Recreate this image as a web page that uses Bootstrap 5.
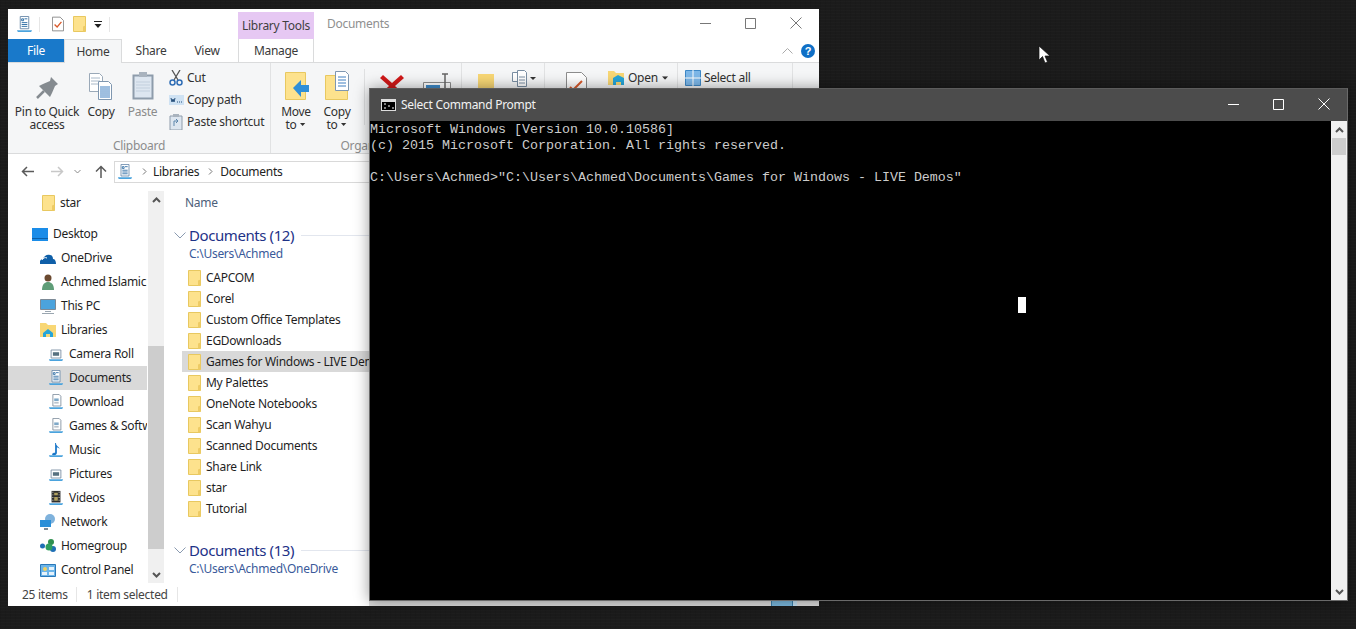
<!DOCTYPE html>
<html lang="en">
<head>
<meta charset="utf-8">
<title>Select Command Prompt</title>
<link rel="stylesheet" href="https://cdn.jsdelivr.net/npm/bootstrap@5.3.0/dist/css/bootstrap.min.css">
<style>
html,body{margin:0;height:629px;overflow:hidden;background:#1b1b1b}
.desk{position:relative;width:1356px;height:629px;overflow:hidden;background-color:#1b1b1b;background-image:repeating-linear-gradient(0deg,rgba(255,255,255,.012) 0 1px,transparent 1px 3px),repeating-linear-gradient(90deg,rgba(0,0,0,.06) 0 1px,transparent 1px 5px);font-family:"Noto Sans",sans-serif;letter-spacing:-.28px}
.xwin{position:absolute;left:8px;top:9px;width:811px;height:597px;background:#fff;color:#1c1c1c;font-size:12px;line-height:16px;overflow:hidden}
.cwin{position:absolute;left:369px;top:88px;width:979px;height:513px;background:#000;border:1px solid #6a6a6a;border-top-color:#5c5c5c;box-shadow:0 0 14px rgba(0,0,0,.4)}
.titlerow{height:30px}
.libtools{align-self:flex-end;width:76px;height:27px;margin-left:128px;background:#e6c8f3;color:#3f3f3f;line-height:28px;text-align:center}
.wintitle{margin-left:13px;color:#8f8f8f;margin-top:-1px}
.capbtn{width:45px;height:28px;margin-bottom:2px}
.tabrow{height:24px;border-bottom:1px solid #dadbdc}
.tabx{height:24px;text-align:center;line-height:24px;color:#3a3a3a}
.tabfile{width:56px;background:#1979ca;color:#fff;height:23px;line-height:23px}
.tabhome{width:58px;background:#f5f6f7;border:1px solid #dadbdc;border-bottom:0;line-height:23px}
.tabshare{width:58px}.tabview{width:54px}
.tabman{width:76px;margin-left:4px;border:solid #dadbdc;border-width:0 1px}
.ribbon{height:91px;background:#f5f6f7;border-bottom:1px solid #dadbdc}
.rgroup{position:relative;height:90px;border-right:1px solid #e1e2e3;flex:none}
.rglabel{position:absolute;left:0;right:0;bottom:-2px;height:18px;line-height:18px;text-align:center;color:#8c8c8c}
.bigb{flex:none;text-align:center;padding-top:8px;line-height:13px;color:#303030}
.bigb svg{display:block;margin:0 auto 1px}
.bigb svg.carety{display:inline-block;margin:0 0 2px 1px}
.off{color:#8b8b8b}
.smallb{height:22px;line-height:22px;color:#303030;white-space:nowrap}
.ricon{width:16px;margin-right:3px;flex:none}
.addrrow{height:37px;padding-bottom:2px}
.addrbox{width:400px;height:22px;border:1px solid #d9d9d9;color:#222}
.navpane{width:139px;flex:none;overflow:hidden;white-space:nowrap;color:#1f1f1f}
.navi{height:24px;flex:none;gap:5px}
.navi svg{flex:none}
.lv0{padding-left:24px}.lv1{padding-left:32px}.lv2{padding-left:40px}.lv1s{padding-left:34px;gap:5px}
.picked{background:#d9d9d9}
.vscroll{width:16px;flex:none;margin-left:1px;background:#f0f0f0}
.vthumb{position:absolute;left:0;right:0;background:#cdcdcd}
.filepane{flex:1;padding-left:10px;min-width:0;white-space:nowrap}
.namehead{height:22px;line-height:24px;padding-left:11px;color:#4c607a}
.grphead{height:21px;font-size:15px;line-height:21px;color:#1e3287;letter-spacing:-.42px}
.grphead svg{margin-right:3px}
.grpline{flex:1;height:1px;background:#e2e6ee;margin-left:7px}
.grppath{height:16px;margin:0 0 0 15px;color:#3a5a9a}
.frow{height:21px;margin-left:8px;padding-left:6px;color:#1f1f1f;gap:5px}
.frow svg{flex:none}
.statbar{height:23px;color:#444;padding-left:14px;position:relative}
.statsep{width:1px;height:15px;background:#e6e6e6}
.viewbar{position:absolute;left:361px;right:0;bottom:0;height:5px;background:#dcdcdc}
.viewon{position:absolute;left:402px;width:22px;top:0;bottom:0;background:#7ab8de;border:solid #3b80ad;border-width:0 1px;box-shadow:4px 0 0 #c4e2f5}
.ctitle{height:32px;background:#4c4c4c;color:#f2f2f2;font-size:12px}
.ccap{width:45px;height:30px;margin-bottom:2px}
.cbody{height:479px}
.cscreen{flex:1;color:#ccc;font:13.33px/16px "Liberation Mono",monospace;letter-spacing:0;white-space:pre;position:relative;padding:1px 0 0}
.cscroll{width:16px;flex:none;background:#f0f0f0;position:relative}
.selcell{position:absolute;left:648px;top:176px;width:8px;height:16px;background:#fff}
.mouse{position:absolute;left:1038px;top:45px}
</style>
</head>
<body>
<svg width="0" height="0" class="d-block position-absolute">
<defs>
<symbol id="fld" viewBox="0 0 13 16"><path d="M.5.5h12v15H.5z" fill="#fde28d" stroke="#e8c860"/><path d="M10 15.500v-5l2.500-1v6z" fill="#eecb65"/></symbol>
<symbol id="libdoc" viewBox="0 0 18 18"><path d="M4.500.5h9v13h-9z" fill="#fff" stroke="#6d8cab"/><path d="M6 3h2v2H6zM9 3h3M6 7h6M6 9h6M6 11h6" stroke="#2f6ea5" fill="none"/><path d="M1 15h16l-1 2H2z" fill="#4ba3dd"/></symbol>
<symbol id="camdoc" viewBox="0 0 18 18"><path d="M3.500 4.500h11v9h-11z" fill="#fff" stroke="#7a8ea3"/><path d="M5.500 7h7v4h-7z" fill="#56707f"/><path d="M1 15h16l-1 2H2z" fill="#4ba3dd"/></symbol>
<symbol id="dldoc" viewBox="0 0 18 18"><path d="M5.500.5h7l2 2v11h-9z" fill="#fff" stroke="#8391a0"/><path d="M7 5h5v3H7z" fill="#7ea8c8"/><path d="M7 10h5" stroke="#8391a0"/><path d="M1 15h16l-1 2H2z" fill="#4ba3dd"/></symbol>
<symbol id="music" viewBox="0 0 18 18"><path d="M9 1c0 4 4 4 4 7-1-1-2-2-3-2v6c0 2-2 3-4 3-1 0-2-1-1-2s2-1 3-1V1z" fill="#1976c8"/><path d="M1 15h16l-1 2H2z" fill="#4ba3dd"/></symbol>
<symbol id="video" viewBox="0 0 18 18"><path d="M4 1h10v13H4z" fill="#2e2e2e"/><path d="M7 3h4v3H7zM7 8h4v4H7z" fill="#b0a060"/><path d="M5 2h1v1H5zM5 5h1v1H5zM5 8h1v1H5zM5 11h1v1H5zM12 2h1v1h-1zM12 5h1v1h-1zM12 8h1v1h-1zM12 11h1v1h-1z" fill="#ddd"/><path d="M1 15h16l-1 2H2z" fill="#4ba3dd"/></symbol>
<symbol id="lcaret" viewBox="0 0 8 4"><path d="M0 0h7L3.500 4z" fill="#333"/></symbol>
</defs>
</svg>
<div class="desk">

<div class="xwin d-flex flex-column">
  <div class="titlerow d-flex align-items-center flex-none">
    <svg style="margin-left:8px" width="17" height="17" viewBox="0 0 18 18"><use href="#libdoc"/></svg>
    <span class="statsep" style="margin-left:6px"></span>
    <svg style="margin-left:12px" width="12" height="16" viewBox="0 0 14 17"><path d="M.5.500h9l4 4v12H.5z" fill="#fff" stroke="#7f7f7f"/><path d="M3 9l3 3 5-6" stroke="#d95a2b" stroke-width="1.500" fill="none"/></svg>
    <svg style="margin-left:9px" width="13" height="16"><use href="#fld"/></svg>
    <svg style="margin-left:8px" width="8" height="7" viewBox="0 0 8 7"><path d="M0 0h8v1H0zM.5 3h7L4 7z" fill="#222"/></svg>
    <span class="statsep" style="margin-left:7px"></span>
    <div class="libtools">Library Tools</div>
    <div class="wintitle">Documents</div>
    <div class="ms-auto d-flex" style="margin-right:1px">
      <div class="capbtn d-flex align-items-center justify-content-center"><svg width="11" height="11"><path d="M0 5.500h11" stroke="#777"/></svg></div>
      <div class="capbtn d-flex align-items-center justify-content-center"><svg width="11" height="11"><path d="M.5.500h10v10H.5z" fill="none" stroke="#777"/></svg></div>
      <div class="capbtn d-flex align-items-center justify-content-center"><svg width="12" height="12"><path d="M.5.500l11 11M11.500.500l-11 11" stroke="#777"/></svg></div>
    </div>
  </div>
  <div class="tabrow d-flex flex-none">
    <div class="tabx tabfile">File</div>
    <div class="tabx tabhome">Home</div>
    <div class="tabx tabshare">Share</div>
    <div class="tabx tabview">View</div>
    <div class="tabx tabman">Manage</div>
    <div class="ms-auto d-flex align-items-center">
      <svg class="me-2" width="11" height="6"><path d="M.5 5.500l5-5 5 5" fill="none" stroke="#aaa"/></svg>
      <svg class="me-1" width="14" height="14"><circle cx="7" cy="7" r="7" fill="#0f6fc6"/><text x="7" y="11" text-anchor="middle" font-size="11" font-weight="700" fill="#fff" font-family="Liberation Sans">?</text></svg>
    </div>
  </div>
  <div class="ribbon d-flex flex-none">
    <div class="rgroup d-flex" style="width:263px">
      <div class="bigb" style="width:78px">
        <svg width="24" height="33" viewBox="0 0 24 33"><path d="M16 6l7 7-3 2-3 7-2 4L4 15l4-2 7-3z" fill="#858b90"/><path d="M9 20l-7 7" stroke="#858b90" stroke-width="2.500"/></svg>
        Pin to Quick<br>access
      </div>
      <div class="bigb" style="width:30px">
        <svg width="26" height="33" viewBox="0 0 26 33"><path d="M1.500 2.500h10l3 3v15h-13z" fill="#fff" stroke="#9aa9b8"/><path d="M3 7h9M3 10h9M3 13h9" stroke="#a8b8c8"/><path d="M10.500 10.500h10l3 3v15h-13z" fill="#fff" stroke="#7f97b0"/><path d="M12 16h10M12 18h10M12 20h10M12 22h10M12 24h10M12 26h10" stroke="#3f7fc0"/></svg>
        Copy
      </div>
      <div class="bigb off" style="width:52px;padding-left:1px">
        <svg width="22" height="33" viewBox="0 0 22 33"><path d="M1.500 4.500h19v23h-19z" fill="#dde6f0" stroke="#8e9cab" stroke-width="2"/><path d="M4 11h14M4 14h14M4 17h14M4 20h14" stroke="#c2cfdd"/><path d="M7 1h8v5H7z" fill="#a9b3be"/></svg>
        Paste
      </div>
      <div class="d-flex flex-column" style="padding-top:4px">
        <div class="smallb d-flex align-items-center"><span class="ricon d-flex justify-content-center"><svg width="14" height="16" viewBox="0 0 14 16"><path d="M3 0l6 10M11 0L5 10" stroke="#555" stroke-width="1.300"/><circle cx="3.500" cy="12.500" r="2.500" fill="none" stroke="#2f6db5" stroke-width="1.500"/><circle cx="10.500" cy="12.500" r="2.500" fill="none" stroke="#2f6db5" stroke-width="1.500"/></svg></span><span>Cut</span></div>
        <div class="smallb d-flex align-items-center"><span class="ricon d-flex justify-content-center"><svg width="15" height="10" viewBox="0 0 15 10"><path d="M0 0h15v10H0z" fill="#cfe2f3"/><path d="M2 3l1 4 1-3 1 3 1-4M8 7h1M10 7h1M12 7h1" stroke="#27507c" fill="none"/></svg></span><span>Copy path</span></div>
        <div class="smallb d-flex align-items-center off"><span class="ricon d-flex justify-content-center"><svg width="14" height="16" viewBox="0 0 14 16"><path d="M1 2h12v14H1z" fill="#dde6f0" stroke="#8e9cab"/><path d="M4 0h6v3H4z" fill="#a9b3be"/><path d="M5 12V7h4M7 5l2 2-2 2" fill="none" stroke="#5d86ac"/></svg></span><span>Paste shortcut</span></div>
      </div>
      <div class="rglabel">Clipboard</div>
    </div>
    <div class="rgroup d-flex" style="width:191px">
      <div class="bigb" style="width:49px;padding-left:1px">
        <svg width="27" height="33" viewBox="0 0 27 33"><path d="M2.500 1.500h20v27h-20z" fill="#fde28d" stroke="#e8c860"/><path d="M10 17l8-8v5h8v7h-8v5z" fill="#2f8fd8"/></svg>
        Move<br>to <svg class="carety" width="6" height="3"><use href="#lcaret"/></svg>
      </div>
      <div class="bigb" style="width:34px">
        <svg width="27" height="33" viewBox="0 0 27 33"><path d="M1.500 4.500h22v24h-22z" fill="#fde28d" stroke="#e8c860"/><path d="M11.500.5h10l3 3v16h-13z" fill="#fff" stroke="#7f97b0"/><path d="M14 6h8M14 9h8M14 12h8M14 15h8" stroke="#3f7fc0"/></svg>
        Copy<br>to <svg class="carety" width="6" height="3"><use href="#lcaret"/></svg>
      </div>
      <div style="width:1px;height:56px;margin:6px 0 0 10px;background:#dfe0e1"></div>
      <div class="bigb" style="margin-left:14px;width:26px"><svg width="24" height="34" viewBox="0 0 24 34"><path d="M3 4l9 8 9-8 3 3-9 8 9 8-3 3-9-8-9 8-3-3 9-8-9-8z" fill="#d01818"/></svg></div>
      <div class="bigb" style="margin-left:17px;width:30px"><svg width="28" height="34" viewBox="0 0 28 34"><path d="M.5 11.500h27v18H.5z" fill="#fff" stroke="#8d8d8d"/><path d="M3 14h14v10H3z" fill="#3f8ccb"/><path d="M19 3h6M22 3v20M19 23h6" stroke="#666" stroke-width="1.500" fill="none"/></svg></div>
      <div class="rglabel" style="left:-2px">Organize</div>
    </div>
    <div class="rgroup d-flex" style="width:83px">
      <div class="bigb" style="margin-left:15px;width:17px;padding-top:11px"><svg width="16" height="28"><path d="M0 0h16v28H0z" fill="#f8d775"/></svg></div>
      <div style="margin:7px 0 0 18px"><svg width="24" height="17" viewBox="0 0 24 17"><path d="M.5 2.500h9v9H.5z" fill="#fff" stroke="#7a8ea3"/><path d="M5.500.5h7l2 2v14h-9z" fill="#fff" stroke="#7a8ea3"/><path d="M7 7h6M7 10h6M7 13h6" stroke="#7a8ea3"/><path d="M18 7h6l-3 3z" fill="#333"/></svg></div>
    </div>
    <div class="rgroup d-flex" style="width:133px">
      <div style="margin:9px 0 0 21px"><svg width="21" height="30" viewBox="0 0 21 30"><path d="M.5.500h15l5 5v24H.5z" fill="#fff" stroke="#8d8d8d"/><path d="M4 15l3 3 9-9" stroke="#d95a2b" stroke-width="2" fill="none"/></svg></div>
      <div class="smallb d-flex align-items-center" style="margin:4px 0 0 21px;height:22px"><svg width="17" height="16" viewBox="0 0 17 16"><path d="M0 1h6l2 2h8v12H0z" fill="#f8d775"/><path d="M5 8l5-3 6 3v7h-3v-3H8v3H5z" fill="#26a5d8"/></svg><span style="margin-left:3px">Open</span><svg class="ms-1" width="7" height="4" viewBox="0 0 8 4"><use href="#lcaret"/></svg></div>
    </div>
    <div class="rgroup d-flex" style="width:115px">
      <div class="smallb d-flex align-items-center" style="margin:4px 0 0 7px;height:22px"><svg width="16" height="16" viewBox="0 0 16 16"><path d="M.5.500h15v15H.5z" fill="#7db7e8" stroke="#3d88c7"/><path d="M8 0v16M0 8h16" stroke="#fff"/></svg><span style="margin-left:3px">Select all</span></div>
    </div>
  </div>
  <div class="addrrow d-flex align-items-center flex-none">
    <svg style="margin-left:13px" width="13" height="11" viewBox="0 0 13 11"><path d="M13 5.500H2M6 1L1.500 5.500 6 10" fill="none" stroke="#5a5a5a" stroke-width="1.500"/></svg>
    <svg style="margin-left:17px" width="13" height="11" viewBox="0 0 13 11"><path d="M0 5.500h11M7 1l4.500 4.500L7 10" fill="none" stroke="#c8c8c8" stroke-width="1.500"/></svg>
    <svg style="margin-left:10px" width="7" height="5" viewBox="0 0 7 5"><path d="M.5 1l3 3 3-3" fill="none" stroke="#8a8a8a"/></svg>
    <svg style="margin-left:14px" width="12" height="13" viewBox="0 0 12 13"><path d="M6 13V2M1 6.500l5-5 5 5" fill="none" stroke="#5a5a5a" stroke-width="1.500"/></svg>
    <div class="addrbox d-flex align-items-center" style="margin-left:7px">
      <svg style="margin-left:2px" width="16" height="16" viewBox="0 0 18 18"><use href="#libdoc"/></svg>
      <svg style="margin-left:9px" width="5" height="7" viewBox="0 0 5 7"><path d="M1 .5l3 3-3 3" fill="none" stroke="#777"/></svg>
      <span style="margin-left:6px">Libraries</span>
      <svg style="margin-left:9px" width="5" height="7" viewBox="0 0 5 7"><path d="M1 .5l3 3-3 3" fill="none" stroke="#777"/></svg>
      <span style="margin-left:7px">Documents</span>
    </div>
  </div>
  <div class="d-flex flex-grow-1" style="min-height:0">
    <div class="navpane d-flex flex-column">
      <div class="navi d-flex align-items-center lv1s"><svg width="13" height="16"><use href="#fld"/></svg><span>star</span></div>
      <div style="height:7px;flex:none"></div>
      <div class="navi d-flex align-items-center lv0"><svg width="16" height="13" viewBox="0 0 16 13"><path d="M0 0h16v13H0z" fill="#1a8ce8"/><path d="M0 10h16v1H0z" fill="#0b5fa8"/></svg><span>Desktop</span></div>
      <div class="navi d-flex align-items-center lv1"><svg width="16" height="11" viewBox="0 0 16 11"><path d="M0 11c-1-3 1-5 3-5 1-3 4-5 7-4 2 0 3 2 3 4 2 0 3 2 3 5z" fill="#0f5fa8"/><path d="M2 7c1-2 3-3 5-2" fill="none" stroke="#fff"/></svg><span>OneDrive</span></div>
      <div class="navi d-flex align-items-center lv1"><svg width="16" height="16" viewBox="0 0 16 16"><circle cx="8" cy="4" r="3.500" fill="#6b4a30"/><path d="M2 16c0-6 3-8 6-8s6 2 6 8z" fill="#5f9d78"/></svg><span>Achmed Islamic</span></div>
      <div class="navi d-flex align-items-center lv1"><svg width="16" height="15" viewBox="0 0 16 15"><path d="M.5.500h15v10H.5z" fill="#4ba3dd" stroke="#7d8a96"/><path d="M5 12h6v1H5zM2 14h12v1H2z" fill="#9aa6b0"/></svg><span>This PC</span></div>
      <div class="navi d-flex align-items-center lv1"><svg width="16" height="14" viewBox="0 0 16 14"><path d="M0 0h6l2 2h8v12H0z" fill="#f8d775"/><path d="M3 10l5-4 5 4v4h-3v-3H6v3H3z" fill="#26a5d8"/></svg><span>Libraries</span></div>
      <div class="navi d-flex align-items-center lv2"><svg width="16" height="16" viewBox="0 0 18 18"><use href="#camdoc"/></svg><span>Camera Roll</span></div>
      <div class="navi d-flex align-items-center lv2 picked"><svg width="16" height="16" viewBox="0 0 18 18"><use href="#libdoc"/></svg><span>Documents</span></div>
      <div class="navi d-flex align-items-center lv2"><svg width="16" height="16" viewBox="0 0 18 18"><use href="#dldoc"/></svg><span>Download</span></div>
      <div class="navi d-flex align-items-center lv2"><svg width="16" height="16" viewBox="0 0 18 18"><use href="#dldoc"/></svg><span>Games &amp; Softw</span></div>
      <div class="navi d-flex align-items-center lv2"><svg width="16" height="16" viewBox="0 0 18 18"><use href="#music"/></svg><span>Music</span></div>
      <div class="navi d-flex align-items-center lv2"><svg width="16" height="16" viewBox="0 0 18 18"><use href="#camdoc"/></svg><span>Pictures</span></div>
      <div class="navi d-flex align-items-center lv2"><svg width="16" height="16" viewBox="0 0 18 18"><use href="#video"/></svg><span>Videos</span></div>
      <div class="navi d-flex align-items-center lv1"><svg width="16" height="16" viewBox="0 0 16 16"><circle cx="10" cy="5" r="5" fill="#7fb2dc"/><path d="M0 6h11v7H0z" fill="#2b8fd8"/><path d="M4 14h4v2H4z" fill="#7d8a96"/></svg><span>Network</span></div>
      <div class="navi d-flex align-items-center lv1"><svg width="16" height="14" viewBox="0 0 16 14"><circle cx="2.500" cy="7" r="2.500" fill="#1f6fb5"/><circle cx="11" cy="3" r="3" fill="#2f8f4f"/><circle cx="13" cy="10" r="3" fill="#1f6fb5"/><circle cx="9" cy="8" r="3.500" fill="#2f9f5f"/></svg><span>Homegroup</span></div>
      <div class="navi d-flex align-items-center lv1"><svg width="16" height="13" viewBox="0 0 16 13"><path d="M.5.500h15v12H.5z" fill="#6cb4e8" stroke="#2a78b8"/><circle cx="5" cy="5" r="2" fill="#f0d060"/><path d="M9 3h5v3H9zM2 8h5v3H2zM9 8h5v3H9z" fill="#e6f2fb"/></svg><span>Control Panel</span></div>
    </div>
    <div class="vscroll position-relative d-flex flex-column align-items-center">
      <svg style="margin-top:6px" width="9" height="6" viewBox="0 0 9 6"><path d="M1 5l3.500-3.500L8 5" fill="none" stroke="#555" stroke-width="2"/></svg>
      <div class="vthumb" style="top:155px;height:203px"></div>
      <svg class="mt-auto" style="margin-bottom:5px" width="9" height="6" viewBox="0 0 9 6"><path d="M1 1l3.500 3.500L8 1" fill="none" stroke="#555" stroke-width="2"/></svg>
    </div>
    <div class="filepane d-flex flex-column">
      <div class="namehead flex-none">Name</div>
      <div class="grphead d-flex align-items-center flex-none" style="margin-top:12px"><svg width="12" height="7" viewBox="0 0 12 7"><path d="M.5.500L6 6 11.500.5" fill="none" stroke="#8a9ab0"/></svg><span>Documents (12)</span><span class="grpline"></span></div>
      <div class="grppath flex-none">C:\Users\Achmed</div>
      <div style="height:5px;flex:none"></div>
      <div class="frow d-flex align-items-center flex-none"><svg width="13" height="16"><use href="#fld"/></svg><span>CAPCOM</span></div>
      <div class="frow d-flex align-items-center flex-none"><svg width="13" height="16"><use href="#fld"/></svg><span>Corel</span></div>
      <div class="frow d-flex align-items-center flex-none"><svg width="13" height="16"><use href="#fld"/></svg><span>Custom Office Templates</span></div>
      <div class="frow d-flex align-items-center flex-none"><svg width="13" height="16"><use href="#fld"/></svg><span>EGDownloads</span></div>
      <div class="frow d-flex align-items-center flex-none picked"><svg width="13" height="16"><use href="#fld"/></svg><span>Games for Windows - LIVE Demos</span></div>
      <div class="frow d-flex align-items-center flex-none"><svg width="13" height="16"><use href="#fld"/></svg><span>My Palettes</span></div>
      <div class="frow d-flex align-items-center flex-none"><svg width="13" height="16"><use href="#fld"/></svg><span>OneNote Notebooks</span></div>
      <div class="frow d-flex align-items-center flex-none"><svg width="13" height="16"><use href="#fld"/></svg><span>Scan Wahyu</span></div>
      <div class="frow d-flex align-items-center flex-none"><svg width="13" height="16"><use href="#fld"/></svg><span>Scanned Documents</span></div>
      <div class="frow d-flex align-items-center flex-none"><svg width="13" height="16"><use href="#fld"/></svg><span>Share Link</span></div>
      <div class="frow d-flex align-items-center flex-none"><svg width="13" height="16"><use href="#fld"/></svg><span>star</span></div>
      <div class="frow d-flex align-items-center flex-none"><svg width="13" height="16"><use href="#fld"/></svg><span>Tutorial</span></div>
      <div class="grphead d-flex align-items-center flex-none" style="margin-top:21px"><svg width="12" height="7" viewBox="0 0 12 7"><path d="M.5.500L6 6 11.500.5" fill="none" stroke="#8a9ab0"/></svg><span>Documents (13)</span><span class="grpline"></span></div>
      <div class="grppath flex-none">C:\Users\Achmed\OneDrive</div>
    </div>
  </div>
  <div class="statbar d-flex align-items-center flex-none">
    <span>25 items</span><span class="statsep" style="margin-left:8px"></span>
    <span style="margin-left:10px">1 item selected</span><span class="statsep" style="margin-left:9px"></span>
    <div class="viewbar"><div class="viewon"></div></div>
  </div>
</div>

<div class="cwin d-flex flex-column">
  <div class="ctitle d-flex align-items-center flex-none">
    <svg style="margin-left:11px" width="15" height="12" viewBox="0 0 15 12"><path d="M0 0h15v12H0z" fill="#dcdcdc"/><path d="M1 3h13v8H1z" fill="#000"/><path d="M3 5h2M3 9h2M7 7h2M11 9h2" stroke="#fff"/></svg>
    <span style="margin-left:5px">Select Command Prompt</span>
    <div class="ms-auto d-flex" style="margin-right:1px">
      <div class="ccap d-flex align-items-center justify-content-center"><svg width="11" height="11"><path d="M0 5.500h11" stroke="#fff"/></svg></div>
      <div class="ccap d-flex align-items-center justify-content-center"><svg width="11" height="11"><path d="M.5.500h10v10H.5z" fill="none" stroke="#fff"/></svg></div>
      <div class="ccap d-flex align-items-center justify-content-center"><svg width="12" height="12"><path d="M.5.500l11 11M11.500.500l-11 11" stroke="#fff"/></svg></div>
    </div>
  </div>
  <div class="cbody d-flex">
    <div class="cscreen">Microsoft Windows [Version 10.0.10586]
(c) 2015 Microsoft Corporation. All rights reserved.

C:\Users\Achmed&gt;"C:\Users\Achmed\Documents\Games for Windows - LIVE Demos"<div class="selcell"></div></div>
    <div class="cscroll d-flex flex-column align-items-center">
      <svg style="margin-top:6px" width="9" height="6" viewBox="0 0 9 6"><path d="M1 5l3.500-3.500L8 5" fill="none" stroke="#555" stroke-width="2"/></svg>
      <div class="vthumb" style="top:17px;height:17px;left:1px;right:1px"></div>
      <svg class="mt-auto" style="margin-bottom:5px" width="9" height="6" viewBox="0 0 9 6"><path d="M1 1l3.500 3.500L8 1" fill="none" stroke="#555" stroke-width="2"/></svg>
    </div>
  </div>
</div>

<svg class="mouse" width="12" height="19" viewBox="0 0 12 19"><path d="M1 1v14l3.500-3.500L7 18l2.500-1L7 11h5z" fill="#fff" stroke="#111" stroke-width=".7"/></svg>
</div>
<script src="https://cdn.jsdelivr.net/npm/bootstrap@5.3.0/dist/js/bootstrap.bundle.min.js"></script>
</body>
</html>
